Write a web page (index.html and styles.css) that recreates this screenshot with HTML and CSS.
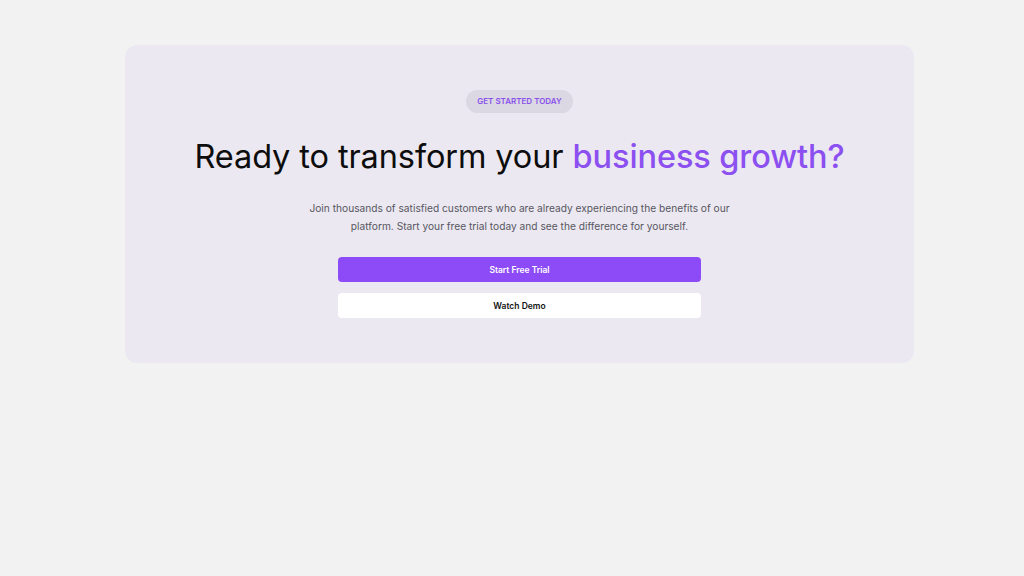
FILE: index.html
```html
<!DOCTYPE html>
<html lang="en">
<head>
    <meta charset="UTF-8">
    <meta name="viewport" content="width=device-width, initial-scale=1.0">
    <title>Get Started</title>
    <link rel="stylesheet" href="styles.css">
</head>
<body>
    <section class="cta">
        <span class="badge">GET STARTED TODAY</span>
        <h1 class="cta-title">Ready to transform your <span class="highlight">business growth?</span></h1>
        <p class="cta-text">Join thousands of satisfied customers who are already experiencing the benefits of our platform. Start your free trial today and see the difference for yourself.</p>
        <div class="actions">
            <button class="btn btn-primary">Start Free Trial</button>
            <button class="btn btn-secondary">Watch Demo</button>
        </div>
    </section>
</body>
</html>
```

FILE: styles.css
```css
body {
    margin: 0;
    padding: 45px 0;
    background-color: #f2f2f2;
    font-family: Inter, "Noto Sans", sans-serif;
}

.cta {
    width: 789px;
    margin: 0 auto 0 125px;
    box-sizing: border-box;
    padding: 45px 0 45px;
    background-color: #ebe8f2;
    border-radius: 12px;
    display: flex;
    flex-direction: column;
    align-items: center;
    text-align: center;
}

.badge {
    display: inline-block;
    padding: 7px 11px;
    border-radius: 12px;
    background-color: #dbd7e3;
    color: #8a52ea;
    font-size: 8px;
    font-weight: 600;
    line-height: 9px;
}

.cta-title {
    margin: 23px 0 0;
    font-size: 32.5px;
    font-weight: 400;
    line-height: 42px;
    color: #0d0d0d;
    letter-spacing: -0.1px;
}

.highlight {
    color: #8c4ff0;
    font-weight: 500;
}

.cta-text {
    margin: 21px 0 0;
    width: 440px;
    font-size: 10.2px;
    line-height: 18px;
    color: #58565f;
}

.actions {
    margin-top: 22px;
    width: 363px;
    display: flex;
    flex-direction: column;
    gap: 11px;
}

.btn {
    height: 25px;
    border: none;
    border-radius: 4px;
    font-family: Inter, "Noto Sans", sans-serif;
    font-size: 8.5px;
    font-weight: 600;
    cursor: pointer;
}

.btn-primary {
    background-color: #8c4bf6;
    color: #fff;
}

.btn-secondary {
    background-color: #fff;
    color: #111;
}
```
